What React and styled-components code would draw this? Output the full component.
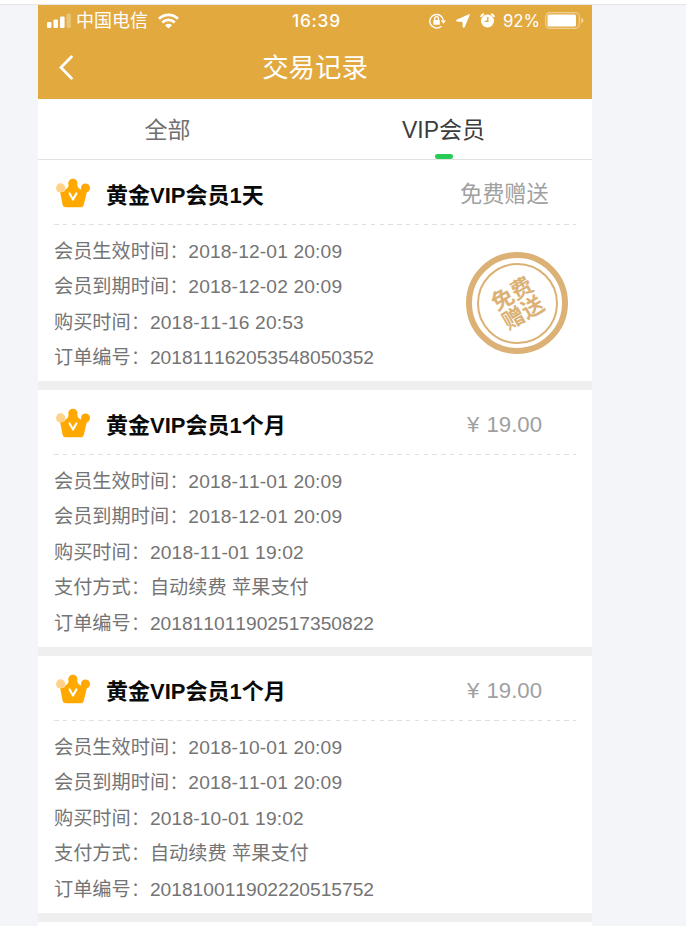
import React from "react";
import styled, { createGlobalStyle } from "styled-components";

const Global = createGlobalStyle`
  *, *::before, *::after { box-sizing: border-box; }
  html, body { margin: 0; padding: 0; background: #f4f5f8; }
  body { height: 926px; overflow: hidden; font-family: "Liberation Sans", "Noto Sans CJK SC", sans-serif; font-kerning: none; }
`;

const Page = styled.div`
  width: 686px;
  height: 926px;
  overflow: hidden;
  border-top: 4px solid #fff;
  background: #f4f5f8;
`;

const TopRule = styled.div`
  height: 1px;
  background: #e6e6e8;
`;

const Phone = styled.main`
  width: 554px;
  margin-left: 38px;
  background: #fff;
  height: 921px;
`;

const Header = styled.header`
  height: 94px;
  background: #e2a93f;
  color: #fff;
`;

const StatusBar = styled.div`
  display: grid;
  grid-template-columns: 246px 1fr auto;
  align-items: center;
  height: 30px;
  padding: 0 8px;
  font-size: 18px;
  line-height: 30px;
`;

const StatusGroup = styled.div`
  display: flex;
  align-items: center;
  white-space: nowrap;
`;

const StatusIcons = styled.div`
  display: flex;
  align-items: center;
  gap: 10px;
`;

const Carrier = styled.span`
  margin: 1px 10px 0 5px;
  font-weight: 400;
`;

const Clock = styled.span`
  font-family: Inter, "Liberation Sans", sans-serif;
  font-size: 17.3px;
  font-weight: 500;
  letter-spacing: 0.75px;
`;

const Percent = styled.span`
  font-family: Inter, "Liberation Sans", sans-serif;
  font-size: 16.8px;
  margin: 0 5px 0 8px;
`;

const NavBar = styled.div`
  display: grid;
  grid-template-columns: 54px 1fr 54px;
  align-items: center;
  height: 64px;
`;

const BackButton = styled.button`
  display: flex;
  padding: 0 0 0 21px;
  border: 0;
  background: none;
`;

const NavTitle = styled.h1`
  margin: 2px 0 0;
  font-size: 26.4px;
  line-height: 62px;
  font-weight: 400;
  text-align: center;
`;

const Tabs = styled.nav`
  display: grid;
  grid-template-columns: 259px 293px;
  height: 61px;
  border-bottom: 1px solid #e2e2e2;
`;

const Tab = styled.div`
  display: flex;
  flex-direction: column;
  align-items: center;
  font-size: 23px;
  line-height: 48px;
  color: ${(p) => (p.$active ? "#3c3c3c" : "#707070")};
  padding-top: 7px;
`;

const Indicator = styled.span`
  width: 18px;
  height: 5px;
  border-radius: 3px;
  background: #27cc57;
`;

const Card = styled.section`
  padding: 0 16px;
  border-bottom: 9px solid #efefef;
  height: ${(p) => p.$height}px;
`;

const CardHead = styled.div`
  display: flex;
  align-items: center;
  height: 64px;
  padding: 2px 0 0 2px;
`;

const CardTitle = styled.h2`
  flex: 1;
  margin: 6px 0 0 16px;
  font-size: 22px;
  line-height: 32px;
  font-weight: 700;
  color: #0a0a0a;
`;

const Price = styled.span`
  width: ${(p) => (p.$wide ? 116 : 109)}px;
  font-size: 22.2px;
  line-height: 32px;
  color: #a0a0a0;
  margin-top: 3px;
  word-spacing: 1px;
`;

const Dashes = styled.div`
  height: 1px;
  background: repeating-linear-gradient(90deg, #e0e0e0 0 4.5px, transparent 4.5px 8.8px);
`;

const CardBody = styled.div`
  display: flex;
  justify-content: space-between;
  padding-top: 9px;
`;

const Rows = styled.div`
  display: flex;
  flex-direction: column;
`;

const Row = styled.div`
  height: 35.4px;
  font-size: 19.2px;
  line-height: 35.4px;
  color: #747474;
  white-space: pre;
`;

const Colon = styled.span`
  display: inline-block;
  width: 19.2px;
  font-weight: 300;
`;

const Value = styled.span`
  letter-spacing: ${(p) => (p.$date ? "0.15px" : "0")};
`;

const Stamp = styled.div`
  display: flex;
  align-items: center;
  justify-content: center;
  width: 102px;
  height: 102px;
  margin: 18px 8px 0 0;
  border: 6px solid #dbb175;
  border-radius: 50%;
`;

const StampRing = styled.div`
  display: flex;
  align-items: center;
  justify-content: center;
  width: 81px;
  height: 81px;
  border: 2px solid #dbb175;
  border-radius: 50%;
`;

const StampText = styled.div`
  width: 44px;
  font-size: 22px;
  line-height: 22px;
  font-weight: 700;
  color: #dbb175;
  transform: translate(1px, 1px) rotate(-30deg);
`;

const Signal = () => (
  <svg width="25" height="16" viewBox="0 0 25 16" fill="#fff">
    <rect x="1" y="9" width="4.4" height="6" rx="1.2" />
    <rect x="7.5" y="6.5" width="4.4" height="8.5" rx="1.2" />
    <rect x="14" y="3.5" width="4.6" height="11.5" rx="1.2" />
    <rect x="20.5" y="0.5" width="4.4" height="14.5" rx="1.2" opacity=".3" />
  </svg>
);

const Wifi = () => (
  <svg width="21" height="16" viewBox="0 0 21 16" fill="none" stroke="#fff" strokeWidth="2.8">
    <path d="M1 5.8C6.4.6 14.6.6 20 5.8" />
    <path d="M4.3 9.4C7.9 6 13.1 6 16.7 9.4" />
    <path d="M7 12.2C9 10.4 12 10.4 14 12.2L10.5 15.6Z" fill="#fff" stroke="none" />
  </svg>
);

const RotationLock = () => (
  <svg width="17" height="16" viewBox="0 0 17 16" fill="none" stroke="#fff" strokeWidth="1.4">
    <path d="M12.3 13.2A6.8 6.8 0 1 1 14.4 7.8" />
    <path d="M11.8 7.4H17L14.4 10.8Z" fill="#fff" stroke="none" />
    <rect x="4.4" y="7" width="6.4" height="4.7" rx=".5" fill="#fff" stroke="none" />
    <path d="M5.7 7V5.5a1.9 1.9 0 0 1 3.8 0V7" />
  </svg>
);

const LocationArrow = () => (
  <svg width="14" height="14" viewBox="0 0 14 14" fill="#fff" stroke="#fff" strokeWidth="1" strokeLinejoin="round">
    <path d="M13.4.6L8.2 13.2H7.2L6.9 7.4L.6 7V6.2Z" />
  </svg>
);

const Alarm = () => (
  <svg width="15" height="15" viewBox="0 0 15 15">
    <circle cx="7.5" cy="8" r="6.5" fill="#fff" />
    <path d="M.9 4A4 4 0 0 1 4 1M11 1A4 4 0 0 1 14.1 4" stroke="#fff" strokeWidth="2" fill="none" />
    <path d="M7.8 4V8.4H4.6" stroke="#e2a93f" strokeWidth="1.4" fill="none" />
  </svg>
);

const Battery = () => (
  <svg width="39" height="17" viewBox="0 0 39 17">
    <rect x=".7" y=".7" width="33.6" height="15.6" rx="4" fill="none" stroke="#fff" strokeWidth="1.2" opacity=".45" />
    <rect x="2.5" y="2.5" width="28.5" height="12" rx="1.5" fill="#fff" />
    <path d="M36.2 5.6Q38.5 6.5 38.5 8.5T36.2 11.4Z" fill="#fff" opacity=".5" />
  </svg>
);

const Chevron = () => (
  <svg width="14" height="25" viewBox="0 0 14 25" fill="none" stroke="#fff" strokeWidth="2.7" strokeLinecap="round">
    <path d="M12.5 1.8L1.9 12.5L12.5 23.2" />
  </svg>
);

const Crown = () => (
  <svg width="34" height="30" viewBox="0 0 34 30">
    <g fill="#ffa800">
      <circle cx="16.9" cy="5.3" r="4.6" />
      <circle cx="29.5" cy="10" r="4.5" />
      <path d="M4 13.6Q8.6 14.6 9.4 11.2Q12 11 12.6 7H21.2Q22 11 25.6 11.4L30.8 14L27.9 26.5Q27.3 29.2 24.8 29.2H9.5Q7.1 29.2 6.6 26.7Z" />
    </g>
    <circle cx="4.6" cy="9.9" r="4.6" fill="#ffd28a" />
    <path d="M13.6 15.4L17 21.6L20.4 15.4" fill="none" stroke="#fff" strokeWidth="2.1" strokeLinecap="round" strokeLinejoin="round" />
  </svg>
);

const RECORDS = [
  {
    title: "黄金VIP会员1天",
    price: "免费赠送",
    free: true,
    height: 230,
    rows: [
      ["会员生效时间", "2018-12-01 20:09"],
      ["会员到期时间", "2018-12-02 20:09"],
      ["购买时间", "2018-11-16 20:53"],
      ["订单编号", "201811162053548050352"],
    ],
  },
  {
    title: "黄金VIP会员1个月",
    price: "¥ 19.00",
    height: 266,
    rows: [
      ["会员生效时间", "2018-11-01 20:09"],
      ["会员到期时间", "2018-12-01 20:09"],
      ["购买时间", "2018-11-01 19:02"],
      ["支付方式", "自动续费 苹果支付"],
      ["订单编号", "201811011902517350822"],
    ],
  },
  {
    title: "黄金VIP会员1个月",
    price: "¥ 19.00",
    height: 266,
    rows: [
      ["会员生效时间", "2018-10-01 20:09"],
      ["会员到期时间", "2018-11-01 20:09"],
      ["购买时间", "2018-10-01 19:02"],
      ["支付方式", "自动续费 苹果支付"],
      ["订单编号", "201810011902220515752"],
    ],
  },
];

const Record = ({ record }) => (
  <Card $height={record.height}>
    <CardHead>
      <Crown />
      <CardTitle>{record.title}</CardTitle>
      <Price $wide={record.free}>{record.price}</Price>
    </CardHead>
    <Dashes />
    <CardBody>
      <Rows>
        {record.rows.map(([label, value]) => (
          <Row key={label}>
            {label}
            <Colon>：</Colon>
            <Value $date={value.includes("-")}>{value}</Value>
          </Row>
        ))}
      </Rows>
      {record.free && (
        <Stamp>
          <StampRing>
            <StampText>免费赠送</StampText>
          </StampRing>
        </Stamp>
      )}
    </CardBody>
  </Card>
);

export default function App() {
  return (
    <Page lang="zh-CN">
      <Global />
      <TopRule />
      <Phone>
        <Header>
          <StatusBar>
            <StatusGroup>
              <Signal />
              <Carrier>中国电信</Carrier>
              <Wifi />
            </StatusGroup>
            <Clock>16:39</Clock>
            <StatusGroup>
              <StatusIcons>
                <RotationLock />
                <LocationArrow />
                <Alarm />
              </StatusIcons>
              <Percent>92%</Percent>
              <Battery />
            </StatusGroup>
          </StatusBar>
          <NavBar>
            <BackButton aria-label="返回">
              <Chevron />
            </BackButton>
            <NavTitle>交易记录</NavTitle>
          </NavBar>
        </Header>
        <Tabs>
          <Tab>全部</Tab>
          <Tab $active>
            VIP会员
            <Indicator />
          </Tab>
        </Tabs>
        {RECORDS.map((record, i) => (
          <Record key={i} record={record} />
        ))}
      </Phone>
    </Page>
  );
}
